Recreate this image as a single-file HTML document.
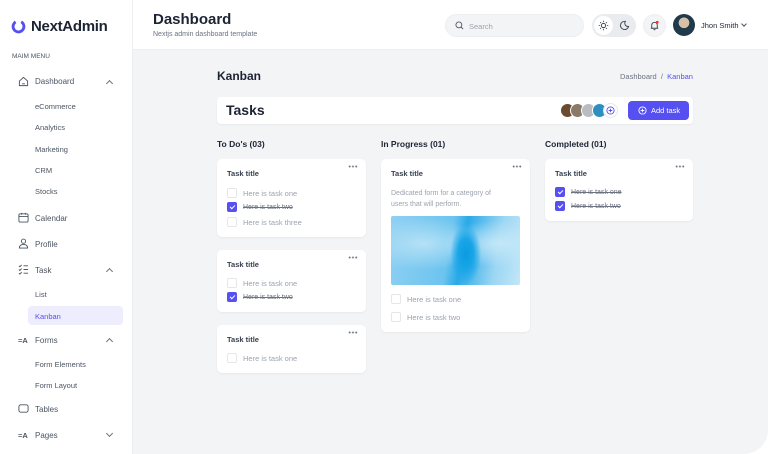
<!DOCTYPE html>
<html><head><meta charset="utf-8"><style>
*{box-sizing:border-box;margin:0;padding:0}
body{width:768px;height:454px;background:#fff;font-family:"Liberation Sans",sans-serif;position:relative;overflow:hidden;color:#1c2434}
.sb{position:absolute;left:0;top:0;width:133px;height:454px;background:#fff;border-right:1px solid #eceef2}
.t{position:absolute;white-space:nowrap}
.hd{position:absolute;left:133px;top:0;width:635px;height:50px;background:#fff;border-bottom:1px solid #eceef2}
.main{position:absolute;left:133px;top:50px;width:635px;height:404px;background:#f3f4f6;border-bottom-right-radius:24px}
.nav{font-size:8px;color:#4b5563}
.sub{font-size:7.5px;color:#4b5563}
.card{position:absolute;background:#fff;border-radius:5px;box-shadow:0 1px 2px rgba(0,0,0,.05)}
.ct{position:absolute;left:10px;top:10px;font-size:7.5px;font-weight:bold;color:#374151}
.dots{position:absolute;right:8px;top:6px;width:10px;height:3px;background:radial-gradient(circle,#6b7280 0.8px,transparent 1.1px) 0 0/3.3px 3px repeat-x}
.tk{position:absolute;left:10px;font-size:7.5px;color:#9ca3af;display:flex;align-items:center;gap:6px}
.cb{width:10px;height:10px;border:1px solid #e5e7eb;border-radius:2px;background:#fff;display:inline-block}
.cb.on{background:#5750f1;border-color:#5750f1;position:relative}
.cb.on:after{content:"";position:absolute;left:3px;top:1px;width:2px;height:4px;border:solid #fff;border-width:0 1.3px 1.3px 0;transform:rotate(45deg)}
.done{text-decoration:line-through;color:#6b7280;font-size:7px}
.ic{position:absolute;left:18px;width:11px;height:11px}
.chev{position:absolute;left:107px;width:5px;height:5px;border:solid #6b7280;border-width:1px 0 0 1px}
.colh{position:absolute;top:139px;font-size:8.5px;font-weight:bold;color:#1c2434}
.av{position:absolute;top:103px;width:15px;height:15px;border-radius:50%;border:1.5px solid #fff}
</style></head><body>
<div class="sb">
 <svg class="t" style="left:11px;top:19px" width="15" height="15" viewBox="0 0 16 16"><circle cx="8" cy="8" r="5.8" fill="none" stroke="#5750f1" stroke-width="3" stroke-dasharray="30 7" transform="rotate(-60 8 8)"/></svg>
 <div class="t" style="left:31px;top:18px;font-size:15px;font-weight:bold;color:#1c2434;letter-spacing:-0.3px">NextAdmin</div>
 <div class="t" style="left:12px;top:53px;font-size:6.5px;color:#4b5563">MAIM MENU</div>
 <svg class="ic" style="top:76px" viewBox="0 0 12 12"><path d="M1.5 5.5L6 1.5l4.5 4v5h-9z" fill="none" stroke="#4b5563" stroke-width="1"/><path d="M4.5 8.5h3" stroke="#4b5563"/></svg>
 <div class="t nav" style="left:35px;top:77px">Dashboard</div><div class="chev" style="top:81px;transform:rotate(45deg)"></div>
 <div class="t sub" style="left:35px;top:102px">eCommerce</div>
 <div class="t sub" style="left:35px;top:123px">Analytics</div>
 <div class="t sub" style="left:35px;top:145px">Marketing</div>
 <div class="t sub" style="left:35px;top:166px">CRM</div>
 <div class="t sub" style="left:35px;top:187px">Stocks</div>
 <svg class="ic" style="top:212px" viewBox="0 0 12 12"><rect x="1" y="2" width="10" height="9" rx="1.5" fill="none" stroke="#4b5563"/><path d="M1 5h10M4 1v2M8 1v2" stroke="#4b5563"/></svg>
 <div class="t nav" style="left:35px;top:214px">Calendar</div>
 <svg class="ic" style="top:238px" viewBox="0 0 12 12"><circle cx="6" cy="3.5" r="2.3" fill="none" stroke="#4b5563"/><path d="M1.5 11c0-3 2-4 4.5-4s4.5 1 4.5 4z" fill="none" stroke="#4b5563"/></svg>
 <div class="t nav" style="left:35px;top:240px">Profile</div>
 <svg class="ic" style="top:264px" viewBox="0 0 12 12"><path d="M1 2l1 1 2-2M1 6l1 1 2-2M1 10l1 1 2-2M6 2h5M6 6h5M6 10h5" fill="none" stroke="#4b5563"/></svg>
 <div class="t nav" style="left:35px;top:266px">Task</div><div class="chev" style="top:269px;transform:rotate(45deg)"></div>
 <div class="t sub" style="left:35px;top:290px">List</div>
 <div style="position:absolute;left:28px;top:306px;width:95px;height:19px;background:#eeedfd;border-radius:4px"></div>
 <div class="t sub" style="left:35px;top:312px;color:#5750f1">Kanban</div>
 <div class="t nav" style="left:18px;top:336px;font-weight:bold;font-size:7.5px">=A</div>
 <div class="t nav" style="left:35px;top:336px">Forms</div><div class="chev" style="top:339px;transform:rotate(45deg)"></div>
 <div class="t sub" style="left:35px;top:360px">Form Elements</div>
 <div class="t sub" style="left:35px;top:381px">Form Layout</div>
 <svg class="ic" style="top:403px" viewBox="0 0 12 12"><rect x="1" y="2" width="10" height="8" rx="2" fill="none" stroke="#4b5563"/></svg>
 <div class="t nav" style="left:35px;top:405px">Tables</div>
 <div class="t nav" style="left:18px;top:431px;font-weight:bold;font-size:7.5px">=A</div>
 <div class="t nav" style="left:35px;top:431px">Pages</div><div class="chev" style="top:431px;transform:rotate(225deg)"></div>
</div>
<div class="hd">
 <div class="t" style="left:20px;top:11px;font-size:15px;font-weight:bold">Dashboard</div>
 <div class="t" style="left:20px;top:31px;font-size:7px;color:#6b7280">Nextjs admin dashboard template</div>
 <div style="position:absolute;left:312px;top:14px;width:139px;height:23px;border-radius:12px;background:#f3f4f6;border:1px solid #eceef2"></div>
 <svg class="t" style="left:322px;top:21px" width="9" height="9" viewBox="0 0 10 10"><circle cx="4.3" cy="4.3" r="3.3" fill="none" stroke="#4b5563"/><path d="M6.8 6.8L9 9" stroke="#4b5563"/></svg>
 <div class="t" style="left:336px;top:22px;font-size:7.5px;color:#9ca3af">Search</div>
 <div style="position:absolute;left:459px;top:14px;width:44px;height:23px;border-radius:12px;background:#e9ebef"></div>
 <div style="position:absolute;left:461px;top:16px;width:19px;height:19px;border-radius:50%;background:#fff"></div>
 <svg class="t" style="left:465px;top:20px" width="11" height="11" viewBox="0 0 12 12"><circle cx="6" cy="6" r="2.3" fill="none" stroke="#374151"/><path d="M6 .8v1.5M6 9.7v1.5M.8 6h1.5M9.7 6h1.5M2.3 2.3l1 1M8.7 8.7l1 1M2.3 9.7l1-1M8.7 3.3l1-1" stroke="#374151" stroke-width=".9"/></svg>
 <svg class="t" style="left:486px;top:20px" width="11" height="11" viewBox="0 0 12 12"><path d="M7 1.5A4.5 4.5 0 1 0 10.5 7 3.5 3.5 0 0 1 7 1.5z" fill="none" stroke="#374151"/></svg>
 <div style="position:absolute;left:510px;top:14px;width:23px;height:23px;border-radius:50%;background:#f3f4f6;border:1px solid #eceef2"></div>
 <svg class="t" style="left:516px;top:20px" width="11" height="11" viewBox="0 0 12 12"><path d="M3 9V5.5a3 3 0 0 1 6 0V9M2 9h8M5 10.5h2" fill="none" stroke="#374151"/><circle cx="9" cy="2.5" r="1.5" fill="#f23030"/></svg>
 <div style="position:absolute;left:540px;top:14px;width:22px;height:22px;border-radius:50%;background:radial-gradient(circle at 50% 40%,#d8c0a8 0 30%,#1f3a4a 32%)"></div>
 <div class="t" style="left:568px;top:21px;font-size:7.5px;color:#1c2434">Jhon Smith</div>
 <div style="position:absolute;left:609px;top:22px;width:4px;height:4px;border:solid #4b5563;border-width:0 1px 1px 0;transform:rotate(45deg)"></div>
</div>
<div class="main"></div>
<div class="t" style="left:217px;top:69px;font-size:12px;font-weight:bold">Kanban</div>
<div class="t" style="left:620px;top:72px;font-size:7.5px;color:#6b7280">Dashboard &nbsp;/ &nbsp;<span style="color:#5750f1">Kanban</span></div>
<div class="card" style="left:217px;top:97px;width:476px;height:27px;border-radius:4px"></div>
<div class="t" style="left:226px;top:102px;font-size:14px;font-weight:bold">Tasks</div>
<div class="av" style="left:560px;background:#6b4a2f"></div>
<div class="av" style="left:570px;background:#8a7a68"></div>
<div class="av" style="left:581px;background:#b9bcc0"></div>
<div class="av" style="left:592px;background:#2c8fc0"></div>
<div class="av" style="left:603px;background:#fff;border:1px solid #e5e7eb"><svg style="position:absolute;left:2px;top:2px" width="9" height="9" viewBox="0 0 10 10"><circle cx="5" cy="5" r="4" fill="none" stroke="#5750f1"/><path d="M5 3v4M3 5h4" stroke="#5750f1"/></svg></div>
<div style="position:absolute;left:628px;top:101px;width:61px;height:19px;background:#5750f1;border-radius:4px"></div>
<svg class="t" style="left:638px;top:106px" width="9" height="9" viewBox="0 0 10 10"><circle cx="5" cy="5" r="4" fill="none" stroke="#fff"/><path d="M5 3v4M3 5h4" stroke="#fff"/></svg>
<div class="t" style="left:651px;top:106px;font-size:7.5px;color:#fff">Add task</div>

<div class="colh" style="left:217px">To Do's (03)</div>
<div class="colh" style="left:381px">In Progress (01)</div>
<div class="colh" style="left:545px">Completed (01)</div>

<div class="card" style="left:217px;top:159px;width:149px;height:78px">
 <div class="ct">Task title</div><div class="dots"></div>
 <div class="tk" style="top:29px"><span class="cb"></span>Here is task one</div>
 <div class="tk" style="top:43px"><span class="cb on"></span><span class="done">Here is task two</span></div>
 <div class="tk" style="top:58px"><span class="cb"></span>Here is task three</div>
</div>
<div class="card" style="left:217px;top:250px;width:149px;height:62px">
 <div class="ct">Task title</div><div class="dots"></div>
 <div class="tk" style="top:28px"><span class="cb"></span>Here is task one</div>
 <div class="tk" style="top:42px"><span class="cb on"></span><span class="done">Here is task two</span></div>
</div>
<div class="card" style="left:217px;top:325px;width:149px;height:48px">
 <div class="ct">Task title</div><div class="dots"></div>
 <div class="tk" style="top:28px"><span class="cb"></span>Here is task one</div>
</div>
<div class="card" style="left:381px;top:159px;width:149px;height:173px">
 <div class="ct">Task title</div><div class="dots"></div>
 <div class="t" style="left:10px;top:29px;font-size:7px;color:#9ca3af;line-height:11px">Dedicated form for a category of<br>users that will perform.</div>
 <div style="position:absolute;left:10px;top:57px;width:129px;height:69px;border-radius:2px;background:radial-gradient(ellipse 12% 45% at 58% 55%,#0a9be0 0,#1aa6e8 50%,transparent 100%),radial-gradient(ellipse at 25% 40%,#b5e1f6 0,transparent 45%),radial-gradient(ellipse at 85% 40%,#c3e7f8 0,transparent 40%),linear-gradient(100deg,#8fd0f2,#6cc4ef 45%,#2aa9e8 55%,#9bd6f3 80%,#c2e6f8)"></div>
 <div class="tk" style="top:135px"><span class="cb"></span>Here is task one</div>
 <div class="tk" style="top:153px"><span class="cb"></span>Here is task two</div>
</div>
<div class="card" style="left:545px;top:159px;width:148px;height:62px">
 <div class="ct">Task title</div><div class="dots"></div>
 <div class="tk" style="top:28px"><span class="cb on"></span><span class="done">Here is task one</span></div>
 <div class="tk" style="top:42px"><span class="cb on"></span><span class="done">Here is task two</span></div>
</div>
</body></html>
